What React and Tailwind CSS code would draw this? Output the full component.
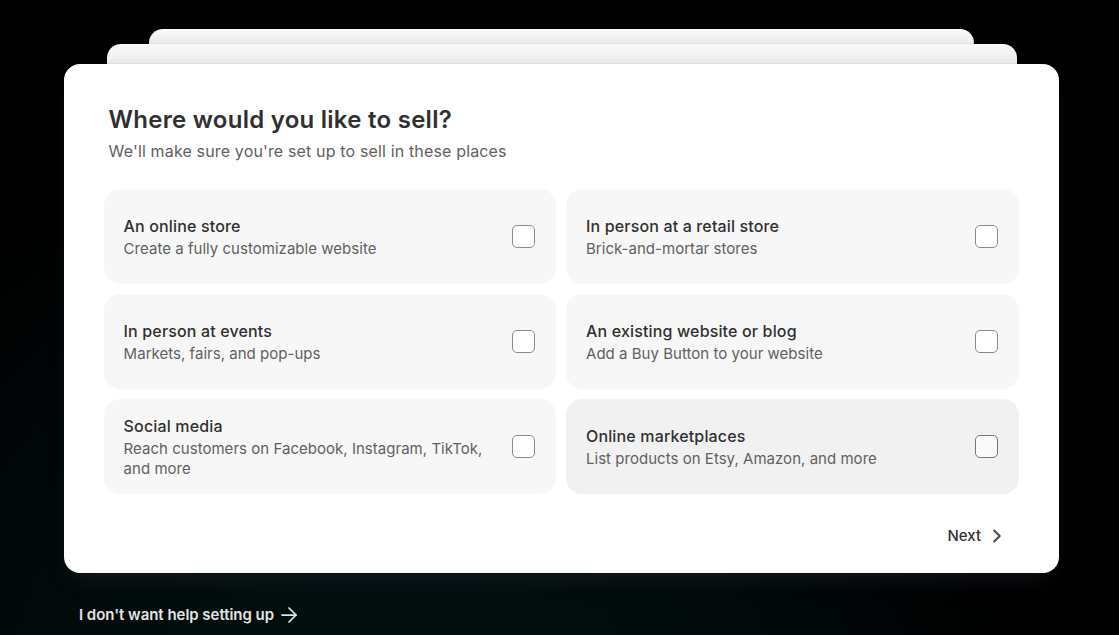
import React from 'react';
import { ArrowRight, ChevronRight } from 'lucide-react';

const options = [
  { title: 'An online store', desc: 'Create a fully customizable website', left: true },
  { title: 'In person at a retail store', desc: 'Brick-and-mortar stores' },
  { title: 'In person at events', desc: 'Markets, fairs, and pop-ups', left: true },
  { title: 'An existing website or blog', desc: 'Add a Buy Button to your website' },
  { title: 'Social media', desc: 'Reach customers on Facebook, Instagram, TikTok, and more', left: true },
  { title: 'Online marketplaces', desc: 'List products on Etsy, Amazon, and more', hover: true },
];

const Option = ({ title, desc, hover, left }) => (
  <div className={`flex h-[95px] items-center justify-between rounded-[16px] pr-[21px] ${left ? 'pl-[19.6px]' : 'pl-5'} ${hover ? 'bg-[#f1f1f1]' : 'bg-[#f7f7f7]'}`}>
    <div className="w-[368px]">
      <div className="text-[16px] leading-[22px] font-medium tracking-[0.15px] text-[#303030]">{title}</div>
      <div className="mt-[2px] text-[15px] leading-[20px] tracking-[0.03px] text-[#616161]">{desc}</div>
    </div>
    <div className={`h-[23px] w-[23px] rounded-[5px] border ${hover ? 'border-[#777777] bg-[#fafafa]' : 'border-[#8a8a8a] bg-white'}`} />
  </div>
);

const App = () => {
  return (
    <div className="h-[635px] overflow-hidden bg-[radial-gradient(ellipse_at_35%_115%,#021010_0%,#020a0a_35%,#000000_62%)] pt-[29px] font-['Inter',sans-serif]">
      <div className="ml-[64px] w-[995px]">
        <div className="mx-[85px] h-[15px] rounded-t-[14px] border-b border-[#e0e0e0] bg-gradient-to-b from-[#fbfbfb] to-[#ebebed]" />
        <div className="mr-[42px] ml-[43px] h-[20px] rounded-t-[14px] border-b border-[#e0e0e0] bg-gradient-to-b from-[#fbfbfb] to-[#ebebed]" />
        <div className="h-[509px] rounded-[16px] bg-white px-10 pt-[39px] shadow-[0_12px_24px_-10px_rgba(48,52,70,0.45)]">
          <div className="pl-[4.6px]">
            <h1 className="text-[24px] leading-[34px] font-semibold tracking-[0.26px] text-[#303030]">Where would you like to sell?</h1>
            <p className="text-[16px] leading-[28px] tracking-[0.15px] text-[#616161]">We'll make sure you're set up to sell in these places</p>
          </div>
          <div className="mt-[24px] grid grid-cols-[452px_453px] gap-[10px]">
            {options.map((o) => (
              <Option key={o.title} {...o} />
            ))}
          </div>
          <div className="mt-[30px] flex items-center justify-end gap-[5px] pr-[11px] text-[15px] leading-[24px] font-medium text-[#303030]">
            Next
            <ChevronRight size={22} strokeWidth={2.25} className="text-[#4a4a4a]" />
          </div>
        </div>
        <div className="mt-[30px] ml-[15px] flex items-center gap-[3px] text-[15px] leading-[22px] font-semibold tracking-[-0.03px] text-[#e3e3e3]">
          I don't want help setting up
          <ArrowRight size={24} strokeWidth={1.75} />
        </div>
      </div>
    </div>
  );
};

export default App;
